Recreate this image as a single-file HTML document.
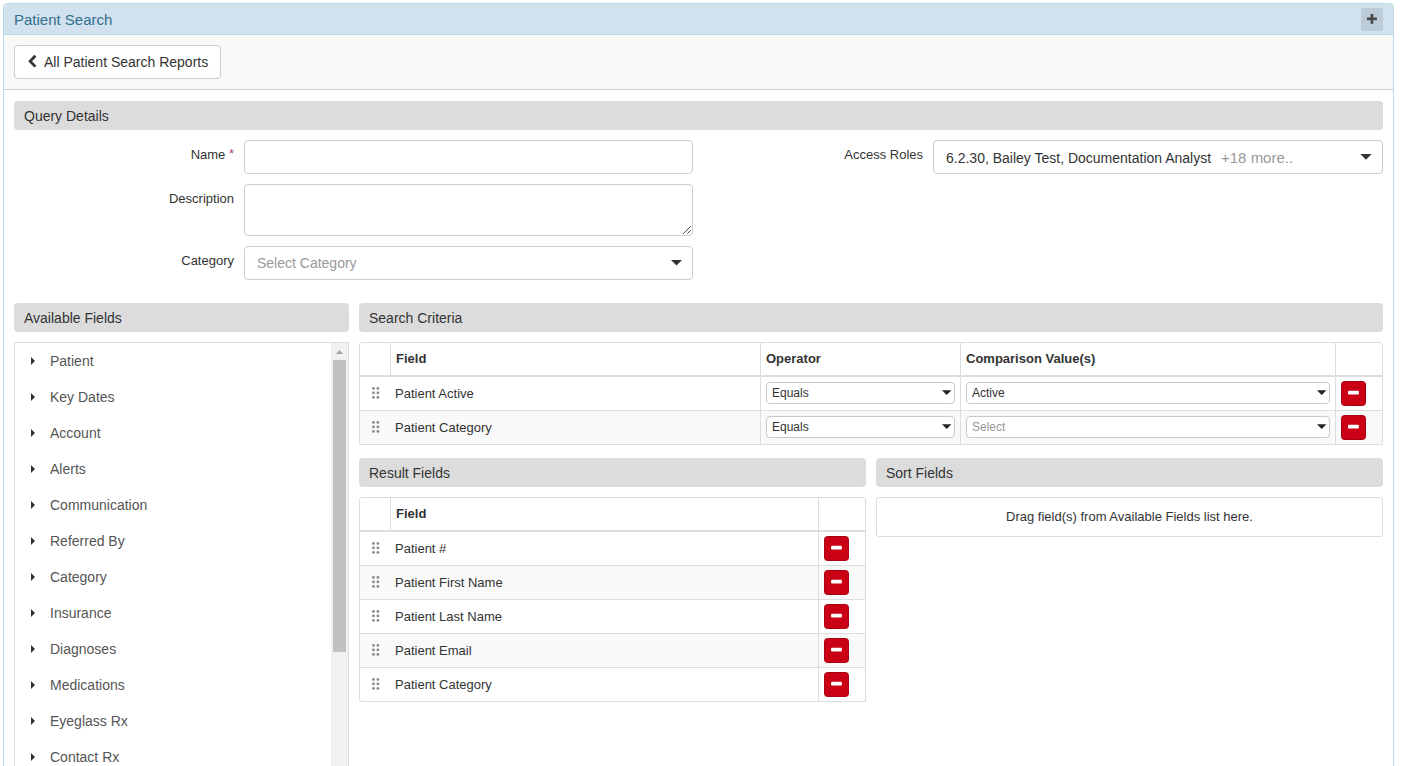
<!DOCTYPE html>
<html><head><meta charset="utf-8"><style>
*{box-sizing:border-box;margin:0;padding:0}
html,body{width:1404px;height:766px;overflow:hidden;background:#fff}
body{font-family:"Liberation Sans",sans-serif;color:#333;position:relative}
.a{position:absolute}
.t{white-space:nowrap}
.panel{left:3px;top:3px;width:1391px;height:800px;border:1px solid #bcdbe6;border-radius:4px 4px 0 0}
.phead{left:4px;top:4px;width:1389px;height:31px;background:#d2e1ee;border-radius:3px 3px 0 0;border-bottom:1px solid #b8dae5}
.ptitle{left:14px;top:5px;height:30px;line-height:30px;font-size:15px;color:#31708f}
.plus{left:1361px;top:8px;width:22px;height:23px;background:#bccbd8;border-radius:3px}
.tool{left:4px;top:35px;width:1389px;height:55px;background:#f9f9f9;border-bottom:1px solid #cfcfcf}
.btn{left:14px;top:45px;width:207px;height:34px;background:#fff;border:1px solid #ccc;border-radius:4px;font-size:14px}
.bar{background:#dcdcdc;border-radius:4px;height:29px;font-size:14px;line-height:29px;padding-left:10px;padding-top:1px;white-space:nowrap;color:#333}
.lbl{font-size:13px;text-align:right;white-space:nowrap;color:#333;line-height:16px}
.inp{background:#fff;border:1px solid #ccc;border-radius:4px}
.caret{width:0;height:0;border-left:6px solid transparent;border-right:6px solid transparent;border-top:6px solid #222}
.box{border:1px solid #ddd;background:#fff}
.tree{font-size:14px;color:#555;line-height:16px}
.tc{width:0;height:0;border-top:4px solid transparent;border-bottom:4px solid transparent;border-left:4px solid #333}
.rm{width:25px;height:25px;background:#ca0014;border:1px solid #a8000f;border-radius:3.5px}
.sel{background:#fff;border:1px solid #c8c8c8;border-radius:4px}
.sc{width:0;height:0;border-left:5px solid transparent;border-right:5px solid transparent;border-top:5px solid #222}
.cell{font-size:13px;line-height:16px}
.th{font-size:13px;font-weight:bold;line-height:16px}
.dot{width:3px;height:3px;border-radius:50%;background:#8c8c8c}
</style></head><body>
<div class="a panel"></div>
<div class="a phead"></div>
<div class="a t ptitle">Patient Search</div>
<div class="a plus"><svg class="a" style="left:0;top:0" width="22" height="23" fill="#4a4a4a"><rect x="5.9" y="9.45" width="10" height="2.7"/><rect x="9.55" y="6" width="2.7" height="9.8"/></svg></div>
<div class="a tool"></div>
<div class="a btn"><svg class="a" style="left:13px;top:8px" width="10" height="15" viewBox="0 0 10 15"><path d="M7.4 1.8 L2.1 7.2 L7.4 12.6" fill="none" stroke="#333" stroke-width="2.7"/></svg><span class="a t" style="left:29px;top:7px;line-height:18px">All Patient Search Reports</span></div>
<div class="a bar" style="left:14px;top:101px;width:1369px">Query Details</div>
<div class="a lbl" style="left:34px;top:147px;width:200px">Name <span style="color:#b0457e;position:relative;top:-1px">*</span></div>
<div class="a inp" style="left:244px;top:140px;width:449px;height:34px"></div>
<div class="a lbl" style="left:34px;top:191px;width:200px">Description</div>
<div class="a inp" style="left:244px;top:184px;width:449px;height:52px"><svg class="a" style="left:437px;top:40px" width="10" height="10"><path d="M8.8 1.2 L1.3 8.7 M8.8 5.2 L5.3 8.7" stroke="#444" stroke-width="1"/></svg></div>
<div class="a lbl" style="left:34px;top:253px;width:200px">Category</div>
<div class="a inp" style="left:244px;top:246px;width:449px;height:34px"><span class="a t" style="left:12px;top:7px;font-size:14px;color:#999;line-height:18px">Select Category</span></div>
<svg class="a" style="left:670px;top:259px" width="14" height="8"><polygon points="1.00,1.00 12.00,1.00 6.50,6.60" fill="#333"/></svg>
<div class="a lbl" style="left:723px;top:147px;width:200px">Access Roles</div>
<div class="a inp" style="left:933px;top:140px;width:450px;height:34px"><span class="a t" style="left:12px;top:8px;font-size:14px;line-height:18px">6.2.30, Bailey Test, Documentation Analyst <span style="color:#999;padding-left:6px;font-size:15px">+18 more..</span></span></div>
<svg class="a" style="left:1359px;top:153px" width="14" height="8"><polygon points="1.30,1.00 12.60,1.00 7.00,6.70" fill="#333"/></svg>
<div class="a bar" style="left:14px;top:303px;width:335px">Available Fields</div>
<div class="a box" style="left:14px;top:342px;width:335px;height:500px"></div>
<div class="a" style="left:331px;top:343px;width:17px;height:430px;background:#f1f1f1"></div>
<div class="a" style="left:333px;top:360px;width:13px;height:292px;background:#c1c1c1"></div>
<svg class="a" style="left:335px;top:349px" width="10" height="7"><polygon points="1.00,5.00 8.00,5.00 4.50,1.00" fill="#a3a3a3"/></svg>
<div class="a tc" style="left:31px;top:357px"></div><div class="a t tree" style="left:50px;top:353px">Patient</div>
<div class="a tc" style="left:31px;top:393px"></div><div class="a t tree" style="left:50px;top:389px">Key Dates</div>
<div class="a tc" style="left:31px;top:429px"></div><div class="a t tree" style="left:50px;top:425px">Account</div>
<div class="a tc" style="left:31px;top:465px"></div><div class="a t tree" style="left:50px;top:461px">Alerts</div>
<div class="a tc" style="left:31px;top:501px"></div><div class="a t tree" style="left:50px;top:497px">Communication</div>
<div class="a tc" style="left:31px;top:537px"></div><div class="a t tree" style="left:50px;top:533px">Referred By</div>
<div class="a tc" style="left:31px;top:573px"></div><div class="a t tree" style="left:50px;top:569px">Category</div>
<div class="a tc" style="left:31px;top:609px"></div><div class="a t tree" style="left:50px;top:605px">Insurance</div>
<div class="a tc" style="left:31px;top:645px"></div><div class="a t tree" style="left:50px;top:641px">Diagnoses</div>
<div class="a tc" style="left:31px;top:681px"></div><div class="a t tree" style="left:50px;top:677px">Medications</div>
<div class="a tc" style="left:31px;top:717px"></div><div class="a t tree" style="left:50px;top:713px">Eyeglass Rx</div>
<div class="a tc" style="left:31px;top:753px"></div><div class="a t tree" style="left:50px;top:749px">Contact Rx</div>
<div class="a bar" style="left:359px;top:303px;width:1024px">Search Criteria</div>
<div class="a" style="left:359px;top:342px;width:1024px;height:103px;border:1px solid #ddd;border-radius:3px;background:#fff"></div>
<div class="a" style="left:359px;top:375px;width:1024px;height:2px;background:#ddd"></div>
<div class="a" style="left:359px;top:410px;width:1024px;height:1px;background:#ddd"></div>
<div class="a" style="left:360px;top:411px;width:1022px;height:33px;background:#f9f9f9"></div>
<div class="a" style="left:359px;top:444px;width:1024px;height:1px;background:#ddd"></div>
<div class="a" style="left:390px;top:342px;width:1px;height:33px;background:#ddd"></div>
<div class="a" style="left:760px;top:342px;width:1px;height:103px;background:#ddd"></div>
<div class="a" style="left:960px;top:342px;width:1px;height:103px;background:#ddd"></div>
<div class="a" style="left:1335px;top:342px;width:1px;height:103px;background:#ddd"></div>
<div class="a t th" style="left:396px;top:351px">Field</div>
<div class="a t th" style="left:766px;top:351px">Operator</div>
<div class="a t th" style="left:966px;top:351px">Comparison Value(s)</div>
<svg class="a" style="left:370px;top:385px" width="12" height="16" viewBox="0 0 12 16" fill="#8a8a8a"><circle cx="3.45" cy="3.4" r="1.4"/><circle cx="3.45" cy="7.9" r="1.4"/><circle cx="3.45" cy="12.4" r="1.4"/><circle cx="7.9" cy="3.4" r="1.4"/><circle cx="7.9" cy="7.9" r="1.4"/><circle cx="7.9" cy="12.4" r="1.4"/></svg>
<div class="a t cell" style="left:395px;top:386px">Patient Active</div>
<div class="a sel" style="left:766px;top:382px;width:189px;height:22px"><span class="a t" style="left:5px;top:3px;font-size:12px;line-height:14px">Equals</span></div>
<div class="a sel" style="left:966px;top:382px;width:364px;height:22px"><span class="a t" style="left:5px;top:3px;font-size:12px;line-height:14px;color:#333">Active</span></div>
<div class="a rm" style="left:1341px;top:381px"><svg class="a" style="left:0;top:0" width="23" height="23"><rect x="6" y="8.8" width="10.9" height="3.6" rx="1" fill="#fff"/></svg></div>
<svg class="a" style="left:941px;top:389px" width="12" height="8"><polygon points="1.00,1.30 10.40,1.30 5.70,6.00" fill="#222"/></svg>
<svg class="a" style="left:1316px;top:389px" width="12" height="8"><polygon points="1.00,1.30 10.40,1.30 5.70,6.00" fill="#222"/></svg>
<svg class="a" style="left:370px;top:419px" width="12" height="16" viewBox="0 0 12 16" fill="#8a8a8a"><circle cx="3.45" cy="3.4" r="1.4"/><circle cx="3.45" cy="7.9" r="1.4"/><circle cx="3.45" cy="12.4" r="1.4"/><circle cx="7.9" cy="3.4" r="1.4"/><circle cx="7.9" cy="7.9" r="1.4"/><circle cx="7.9" cy="12.4" r="1.4"/></svg>
<div class="a t cell" style="left:395px;top:420px">Patient Category</div>
<div class="a sel" style="left:766px;top:416px;width:189px;height:22px"><span class="a t" style="left:5px;top:3px;font-size:12px;line-height:14px">Equals</span></div>
<div class="a sel" style="left:966px;top:416px;width:364px;height:22px"><span class="a t" style="left:5px;top:3px;font-size:12px;line-height:14px;color:#999">Select</span></div>
<div class="a rm" style="left:1341px;top:415px"><svg class="a" style="left:0;top:0" width="23" height="23"><rect x="6" y="8.8" width="10.9" height="3.6" rx="1" fill="#fff"/></svg></div>
<svg class="a" style="left:941px;top:423px" width="12" height="8"><polygon points="1.00,1.30 10.40,1.30 5.70,6.00" fill="#222"/></svg>
<svg class="a" style="left:1316px;top:423px" width="12" height="8"><polygon points="1.00,1.30 10.40,1.30 5.70,6.00" fill="#222"/></svg>
<div class="a bar" style="left:359px;top:458px;width:507px">Result Fields</div>
<div class="a" style="left:359px;top:497px;width:507px;height:205px;border:1px solid #ddd;border-radius:3px;background:#fff"></div>
<div class="a" style="left:359px;top:530px;width:507px;height:2px;background:#ddd"></div>
<div class="a" style="left:359px;top:565px;width:507px;height:1px;background:#ddd"></div>
<div class="a" style="left:360px;top:566px;width:505px;height:33px;background:#f9f9f9"></div>
<div class="a" style="left:359px;top:599px;width:507px;height:1px;background:#ddd"></div>
<div class="a" style="left:359px;top:633px;width:507px;height:1px;background:#ddd"></div>
<div class="a" style="left:360px;top:634px;width:505px;height:33px;background:#f9f9f9"></div>
<div class="a" style="left:359px;top:667px;width:507px;height:1px;background:#ddd"></div>
<div class="a" style="left:359px;top:701px;width:507px;height:1px;background:#ddd"></div>
<div class="a" style="left:390px;top:497px;width:1px;height:33px;background:#ddd"></div>
<div class="a" style="left:818px;top:497px;width:1px;height:205px;background:#ddd"></div>
<div class="a t th" style="left:396px;top:506px">Field</div>
<svg class="a" style="left:370px;top:540px" width="12" height="16" viewBox="0 0 12 16" fill="#8a8a8a"><circle cx="3.45" cy="3.4" r="1.4"/><circle cx="3.45" cy="7.9" r="1.4"/><circle cx="3.45" cy="12.4" r="1.4"/><circle cx="7.9" cy="3.4" r="1.4"/><circle cx="7.9" cy="7.9" r="1.4"/><circle cx="7.9" cy="12.4" r="1.4"/></svg>
<div class="a t cell" style="left:395px;top:541px">Patient #</div>
<div class="a rm" style="left:824px;top:536px"><svg class="a" style="left:0;top:0" width="23" height="23"><rect x="6" y="8.8" width="10.9" height="3.6" rx="1" fill="#fff"/></svg></div>
<svg class="a" style="left:370px;top:574px" width="12" height="16" viewBox="0 0 12 16" fill="#8a8a8a"><circle cx="3.45" cy="3.4" r="1.4"/><circle cx="3.45" cy="7.9" r="1.4"/><circle cx="3.45" cy="12.4" r="1.4"/><circle cx="7.9" cy="3.4" r="1.4"/><circle cx="7.9" cy="7.9" r="1.4"/><circle cx="7.9" cy="12.4" r="1.4"/></svg>
<div class="a t cell" style="left:395px;top:575px">Patient First Name</div>
<div class="a rm" style="left:824px;top:570px"><svg class="a" style="left:0;top:0" width="23" height="23"><rect x="6" y="8.8" width="10.9" height="3.6" rx="1" fill="#fff"/></svg></div>
<svg class="a" style="left:370px;top:608px" width="12" height="16" viewBox="0 0 12 16" fill="#8a8a8a"><circle cx="3.45" cy="3.4" r="1.4"/><circle cx="3.45" cy="7.9" r="1.4"/><circle cx="3.45" cy="12.4" r="1.4"/><circle cx="7.9" cy="3.4" r="1.4"/><circle cx="7.9" cy="7.9" r="1.4"/><circle cx="7.9" cy="12.4" r="1.4"/></svg>
<div class="a t cell" style="left:395px;top:609px">Patient Last Name</div>
<div class="a rm" style="left:824px;top:604px"><svg class="a" style="left:0;top:0" width="23" height="23"><rect x="6" y="8.8" width="10.9" height="3.6" rx="1" fill="#fff"/></svg></div>
<svg class="a" style="left:370px;top:642px" width="12" height="16" viewBox="0 0 12 16" fill="#8a8a8a"><circle cx="3.45" cy="3.4" r="1.4"/><circle cx="3.45" cy="7.9" r="1.4"/><circle cx="3.45" cy="12.4" r="1.4"/><circle cx="7.9" cy="3.4" r="1.4"/><circle cx="7.9" cy="7.9" r="1.4"/><circle cx="7.9" cy="12.4" r="1.4"/></svg>
<div class="a t cell" style="left:395px;top:643px">Patient Email</div>
<div class="a rm" style="left:824px;top:638px"><svg class="a" style="left:0;top:0" width="23" height="23"><rect x="6" y="8.8" width="10.9" height="3.6" rx="1" fill="#fff"/></svg></div>
<svg class="a" style="left:370px;top:676px" width="12" height="16" viewBox="0 0 12 16" fill="#8a8a8a"><circle cx="3.45" cy="3.4" r="1.4"/><circle cx="3.45" cy="7.9" r="1.4"/><circle cx="3.45" cy="12.4" r="1.4"/><circle cx="7.9" cy="3.4" r="1.4"/><circle cx="7.9" cy="7.9" r="1.4"/><circle cx="7.9" cy="12.4" r="1.4"/></svg>
<div class="a t cell" style="left:395px;top:677px">Patient Category</div>
<div class="a rm" style="left:824px;top:672px"><svg class="a" style="left:0;top:0" width="23" height="23"><rect x="6" y="8.8" width="10.9" height="3.6" rx="1" fill="#fff"/></svg></div>
<div class="a bar" style="left:876px;top:458px;width:507px">Sort Fields</div>
<div class="a box" style="left:876px;top:497px;width:507px;height:40px;border-radius:3px"><span class="a t" style="left:0;width:100%;text-align:center;top:11px;font-size:13px;line-height:16px">Drag field(s) from Available Fields list here.</span></div>
</body></html>
